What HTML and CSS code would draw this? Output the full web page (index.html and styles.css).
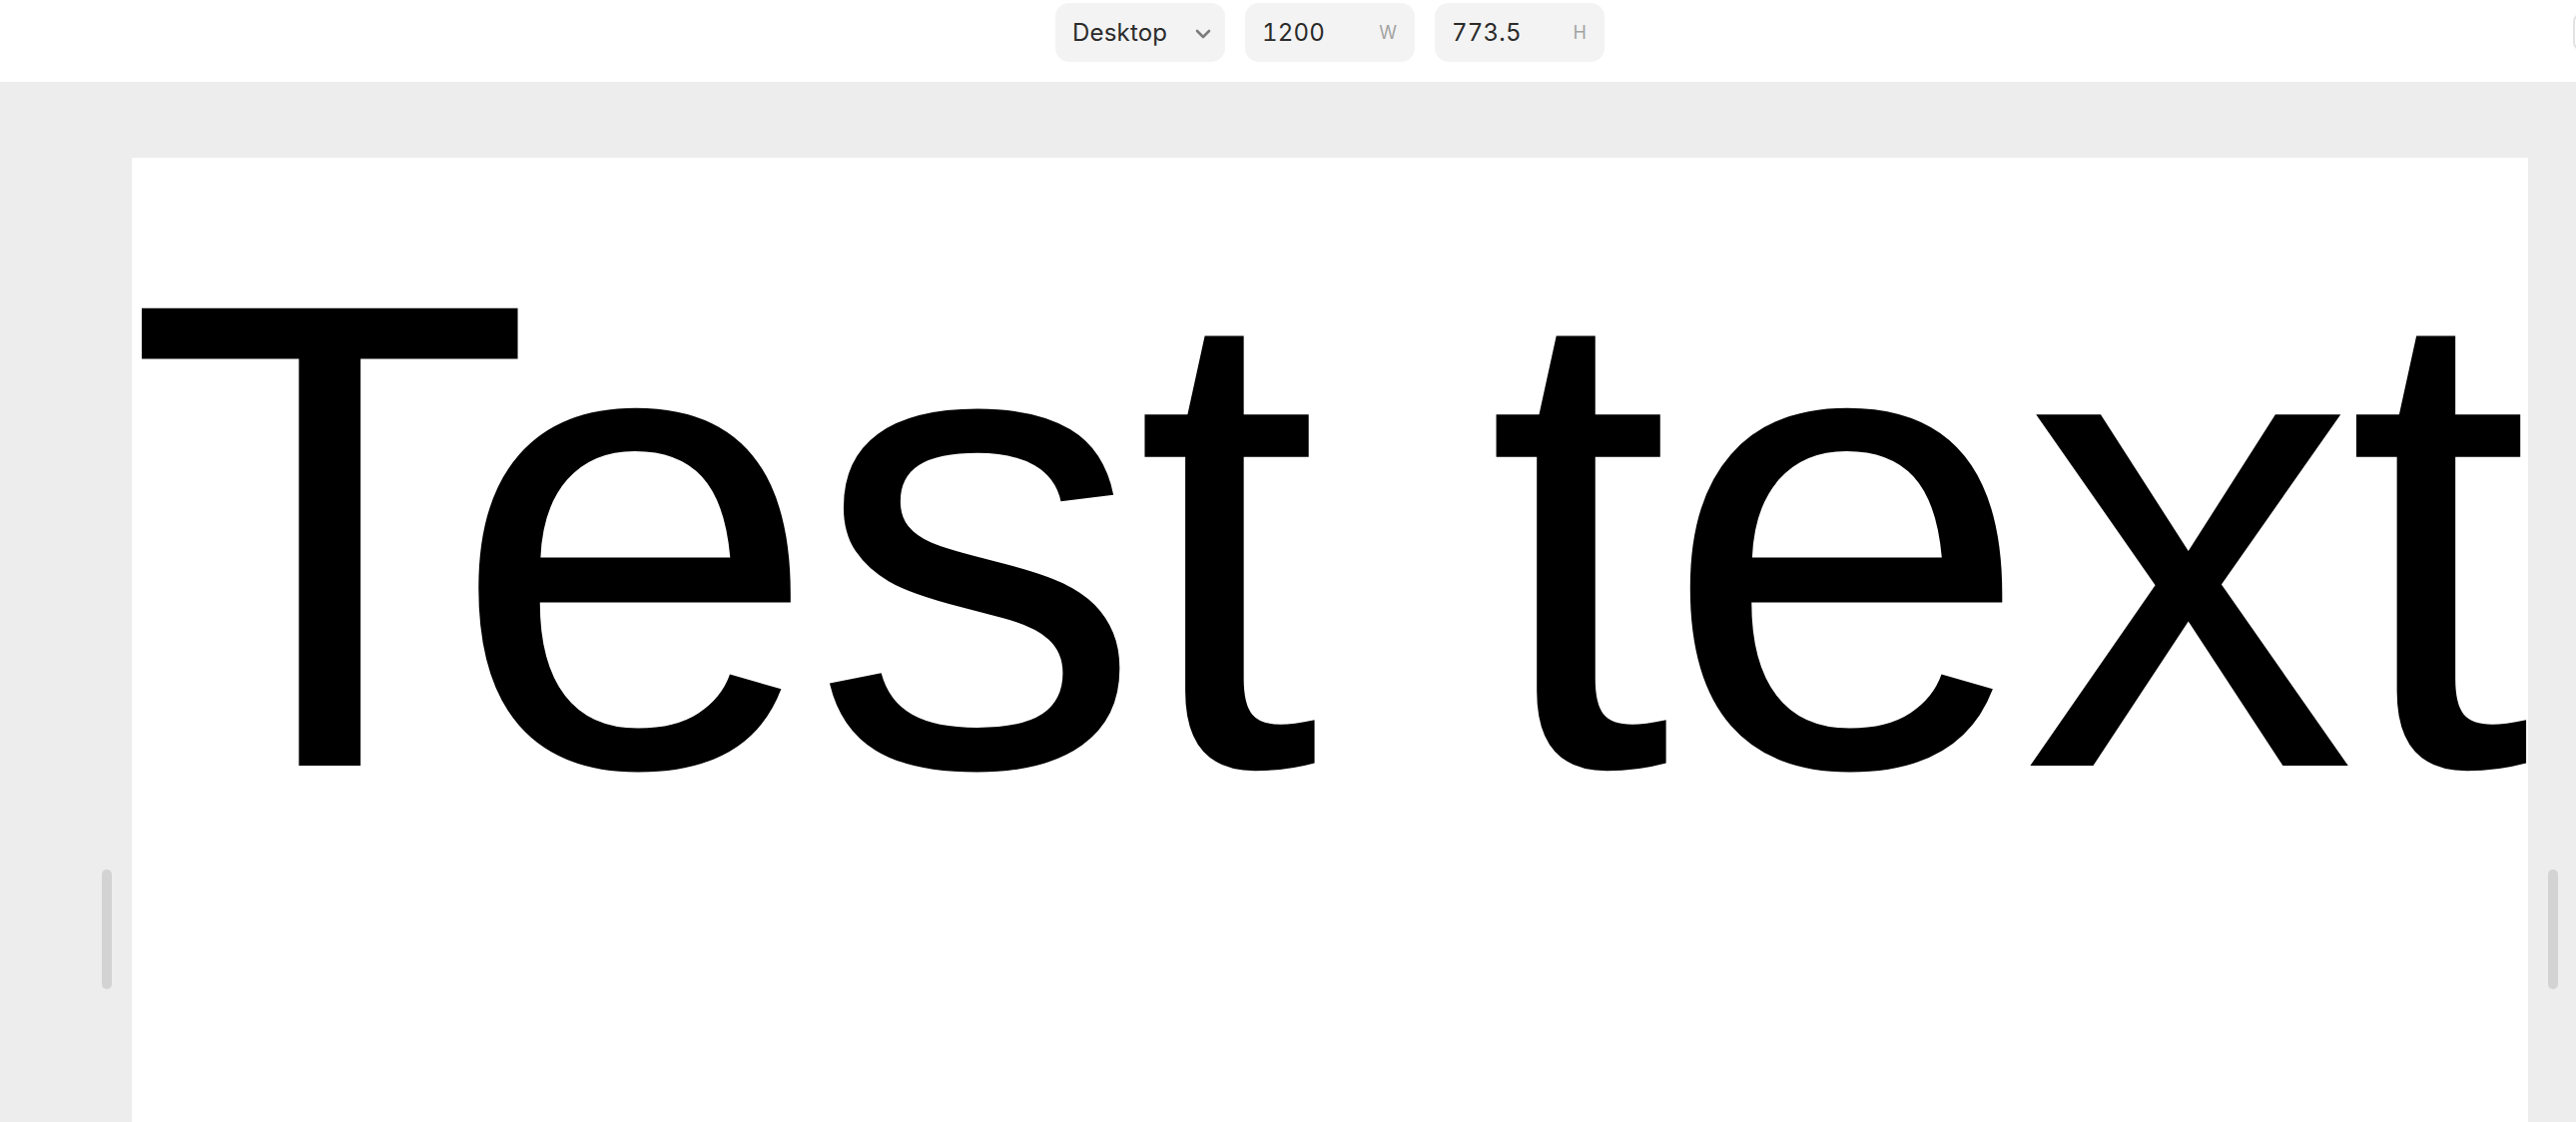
FILE: index.html
```html
<!DOCTYPE html>
<html lang="en">
<head>
<meta charset="utf-8">
<title>Preview</title>
<link rel="stylesheet" href="styles.css">
</head>
<body>
<header class="topbar">
  <div class="topbar-center">
    <div class="field field-select">
      <span class="field-value">Desktop</span>
      <svg class="chevron" width="16" height="10" viewBox="0 0 16 10" aria-hidden="true"><path d="M2 2 L8 8 L14 2" fill="none" stroke="#7c7c7c" stroke-width="2.6" stroke-linecap="round" stroke-linejoin="round"/></svg>
    </div>
    <div class="field">
      <span class="field-value">1200</span>
      <span class="field-unit">W</span>
    </div>
    <div class="field">
      <span class="field-value">773.5</span>
      <span class="field-unit">H</span>
    </div>
  </div>
  <div class="topbar-right">
    <div class="edge-button"></div>
  </div>
</header>
<main class="stage">
  <div class="gutter gutter-left"><span class="handle"></span></div>
  <section class="canvas">
    <p class="display-text">Test text</p>
  </section>
  <div class="gutter gutter-right"><span class="handle"></span></div>
</main>
</body>
</html>
```

FILE: styles.css
```css
html, body {
  margin: 0;
  padding: 0;
  background: #ededed;
  overflow: hidden;
}

body {
  font-family: Inter, "Noto Sans", sans-serif;
  width: 2580px;
  height: 1124px;
}

.topbar {
  height: 82px;
  background: #ffffff;
  display: flex;
  padding-left: 132px;
  overflow: hidden;
}

.topbar-center {
  width: 2400px;
  display: flex;
  justify-content: center;
  align-items: flex-start;
  gap: 20px;
  padding-top: 3px;
  box-sizing: border-box;
}

.field {
  width: 170px;
  height: 59px;
  box-sizing: border-box;
  background: #f3f3f3;
  border-radius: 14px;
  display: flex;
  align-items: center;
  justify-content: space-between;
  padding: 0 18px 0 17px;
}

.field-select {
  padding-right: 14px;
}

.field-value {
  font-size: 24px;
  color: #2b2b2b;
  letter-spacing: 0.2px;
  font-variant-numeric: tabular-nums;
}

.field-unit {
  font-size: 18px;
  color: #a3a3a3;
}

.chevron {
  display: block;
  margin-top: 2px;
}

.topbar-right {
  width: 48px;
  display: flex;
  align-items: flex-start;
  padding-top: 12px;
  padding-left: 45px;
  box-sizing: border-box;
}

.edge-button {
  flex: none;
  width: 80px;
  height: 40px;
  box-sizing: border-box;
  border: 2px solid #e2e2e2;
  border-radius: 10px;
}

.stage {
  display: flex;
  padding-top: 76px;
  height: 1042px;
  box-sizing: border-box;
  overflow: hidden;
}

.gutter {
  height: 966px;
  display: flex;
  align-items: flex-start;
  padding-top: 713px;
  box-sizing: border-box;
  flex: none;
}

.gutter-left {
  width: 132px;
  justify-content: flex-end;
  padding-right: 20px;
}

.gutter-right {
  width: 48px;
  padding-left: 20px;
}

.handle {
  width: 10px;
  height: 120px;
  border-radius: 5px;
  background: #d3d3d3;
}

.canvas {
  width: 2400px;
  height: 966px;
  background: #ffffff;
  flex: none;
}

.display-text {
  margin: 0;
  padding: 45px 0 0 0;
  text-indent: -5px;
  font-family: "Liberation Sans", Arial, sans-serif;
  font-size: 666px;
  line-height: 1;
  letter-spacing: -9px;
  color: #000000;
  white-space: nowrap;
}
```
